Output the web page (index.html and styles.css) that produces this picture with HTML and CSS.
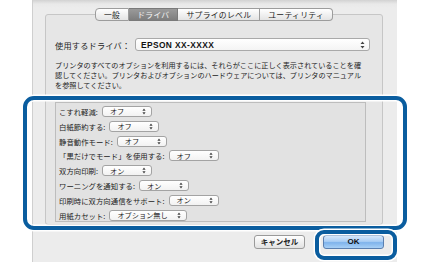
FILE: index.html
```html
<!DOCTYPE html>
<html lang="ja">
<head>
    <meta charset="UTF-8">
    <title>プリンタオプション</title>
    <link rel="stylesheet" href="styles.css">
</head>
<body>

<div class="screen">
    <div class="window">
        <div class="tabbox">
            <div class="tabs">
                <span class="tab">一般</span>
                <span class="tab active">ドライバ</span>
                <span class="tab">サプライのレベル</span>
                <span class="tab">ユーティリティ</span>
            </div>

            <div class="driver-row">
                <span class="driver-label">使用するドライバ：</span>
                <div class="driver-select">
                    <span>EPSON XX-XXXX</span>
                    <svg class="arrows" width="5" height="8" viewBox="0 0 5 8"><path d="M2.5 0.5 L4.5 3 L0.5 3 Z M2.5 7.5 L4.5 5 L0.5 5 Z" fill="#444"/></svg>
                </div>
            </div>

            <p class="note">
                プリンタのすべてのオプションを利用するには、それらがここに正しく表示されていることを確<br>
                認してください。プリンタおよびオプションのハードウェアについては、プリンタのマニュアル<br>
                を参照してください。
            </p>

            <div class="options">
                <div class="opt-row">
                    <span class="opt-label">こすれ軽減:</span>
                    <div class="popup"><span>オフ</span><svg class="arrows" width="4" height="7" viewBox="0 0 4 7"><path d="M2 0.5 L3.6 2.7 L0.4 2.7 Z M2 6.5 L3.6 4.3 L0.4 4.3 Z" fill="#444"/></svg></div>
                </div>
                <div class="opt-row">
                    <span class="opt-label">白紙節約する:</span>
                    <div class="popup"><span>オフ</span><svg class="arrows" width="4" height="7" viewBox="0 0 4 7"><path d="M2 0.5 L3.6 2.7 L0.4 2.7 Z M2 6.5 L3.6 4.3 L0.4 4.3 Z" fill="#444"/></svg></div>
                </div>
                <div class="opt-row">
                    <span class="opt-label">静音動作モード:</span>
                    <div class="popup"><span>オフ</span><svg class="arrows" width="4" height="7" viewBox="0 0 4 7"><path d="M2 0.5 L3.6 2.7 L0.4 2.7 Z M2 6.5 L3.6 4.3 L0.4 4.3 Z" fill="#444"/></svg></div>
                </div>
                <div class="opt-row">
                    <span class="opt-label">「黒だけでモード」を使用する:</span>
                    <div class="popup"><span>オフ</span><svg class="arrows" width="4" height="7" viewBox="0 0 4 7"><path d="M2 0.5 L3.6 2.7 L0.4 2.7 Z M2 6.5 L3.6 4.3 L0.4 4.3 Z" fill="#444"/></svg></div>
                </div>
                <div class="opt-row">
                    <span class="opt-label">双方向印刷:</span>
                    <div class="popup"><span>オン</span><svg class="arrows" width="4" height="7" viewBox="0 0 4 7"><path d="M2 0.5 L3.6 2.7 L0.4 2.7 Z M2 6.5 L3.6 4.3 L0.4 4.3 Z" fill="#444"/></svg></div>
                </div>
                <div class="opt-row">
                    <span class="opt-label">ワーニングを通知する:</span>
                    <div class="popup"><span>オン</span><svg class="arrows" width="4" height="7" viewBox="0 0 4 7"><path d="M2 0.5 L3.6 2.7 L0.4 2.7 Z M2 6.5 L3.6 4.3 L0.4 4.3 Z" fill="#444"/></svg></div>
                </div>
                <div class="opt-row">
                    <span class="opt-label">印刷時に双方向通信をサポート:</span>
                    <div class="popup"><span>オン</span><svg class="arrows" width="4" height="7" viewBox="0 0 4 7"><path d="M2 0.5 L3.6 2.7 L0.4 2.7 Z M2 6.5 L3.6 4.3 L0.4 4.3 Z" fill="#444"/></svg></div>
                </div>
                <div class="opt-row">
                    <span class="opt-label">用紙カセット:</span>
                    <div class="popup wide"><span>オプション無し</span><svg class="arrows" width="4" height="7" viewBox="0 0 4 7"><path d="M2 0.5 L3.6 2.7 L0.4 2.7 Z M2 6.5 L3.6 4.3 L0.4 4.3 Z" fill="#444"/></svg></div>
                </div>
            </div>
        </div>

        <div class="buttons">
            <button class="btn">キャンセル</button>
            <button class="btn default">OK</button>
        </div>
    </div>

    <!-- callouts drawn over the dialog -->
    <div class="callout callout-options"></div>
    <div class="callout callout-ok"></div>
</div>

</body>
</html>
```

FILE: styles.css
```css
body {
    margin: 0;
    background: #fff;
    font-family: "Noto Sans CJK JP", "DejaVu Sans", sans-serif;
    color: #1e1e1e;
}

.screen {
    position: relative;
    width: 430px;
    height: 262px;
    overflow: hidden;
}

.window {
    margin-left: 32px;
    width: 365px;
    height: 262px;
    box-sizing: border-box;
    border-left: 1px solid #cfcfcf;
    background: linear-gradient(#d2d2d2, #e9e9e9 4px, #ececec 8px);
    padding-top: 14px;
}

/* group box with tabs */
.tabbox {
    margin: 0 14px 0 12px;
    height: 211px;
    box-sizing: border-box;
    border: 1px solid #c6c6c6;
    border-radius: 3px;
    background: #e6e6e6;
    padding: 0 0 0 9px;
}

.tabs {
    display: flex;
    justify-content: center;
    margin: -7px 0 0 -9px;
    height: 13px;
}

.tab {
    font-size: 7.8px;
    line-height: 11px;
    padding: 0 8px;
    border: 1px solid #9c9c9c;
    border-left: none;
    background: linear-gradient(#ffffff, #f1f1f1 50%, #e4e4e4);
    color: #1a1a1a;
    letter-spacing: 0.3px;
}

.tab:first-child {
    border-left: 1px solid #9c9c9c;
    border-radius: 4px 0 0 4px;
}

.tab:last-child {
    border-radius: 0 4px 4px 0;
}

.tab.active {
    background: linear-gradient(#9a9a9a, #7e7e7e);
    color: #f4f4f4;
    border-color: #7a7a7a;
}

/* driver */
.driver-row {
    display: flex;
    align-items: center;
    margin-top: 17px;
    height: 13px;
}

.driver-label {
    font-size: 8.2px;
    width: 80px;
    letter-spacing: 0.2px;
}

.driver-select {
    width: 235px;
    height: 13px;
    box-sizing: border-box;
    border: 1px solid #a9a9a9;
    border-radius: 3px;
    background: linear-gradient(#ffffff, #f4f4f4);
    display: flex;
    align-items: center;
    justify-content: space-between;
    padding: 0 4px 0 5px;
    font-family: "Liberation Sans", Arial, sans-serif;
    font-size: 8.4px;
    font-weight: bold;
    color: #111;
}

.driver-select span {
    letter-spacing: 0.4px;
}

.note {
    margin: 9px 0 0;
    font-size: 7.15px;
    line-height: 10px;
    color: #222;
    white-space: nowrap;
}

/* installable options list */
.options {
    margin: 12px 16px 0 0;
    height: 120px;
    box-sizing: border-box;
    border: 1px solid #bdbdbd;
    background: #e2e2e2;
    padding: 1px 0 0 3px;
}

.opt-row {
    display: flex;
    align-items: center;
    height: 14.85px;
}

.opt-label {
    font-size: 7.4px;
    color: #222;
    margin-right: 4px;
}

.popup {
    width: 50px;
    height: 11px;
    box-sizing: border-box;
    border: 1px solid #a3a3a3;
    border-radius: 3px;
    background: linear-gradient(#ffffff, #f2f2f2);
    display: flex;
    align-items: center;
    justify-content: space-between;
    padding: 0 5px 0 7px;
    font-size: 7.2px;
    color: #1a1a1a;
}

.popup.wide {
    width: 78px;
}

/* bottom buttons */
.buttons {
    display: flex;
    justify-content: flex-end;
    gap: 18px;
    margin-top: 10px;
    padding-right: 13px;
}

.btn {
    height: 14px;
    width: 51px;
    padding: 0;
    border: 1px solid #9a9a9a;
    border-radius: 3px;
    background: linear-gradient(#ffffff, #f0f0f0 50%, #e2e2e2);
    font-family: "Noto Sans CJK JP", sans-serif;
    font-size: 7.5px;
    font-weight: bold;
    color: #222;
    line-height: 12px;
}

.btn.default {
    width: 61px;
    border-color: #5a7fb0;
    background: linear-gradient(#d6e8fb, #a9cdf4 45%, #7fb3ec 55%, #a8d0f6);
    font-family: "Liberation Sans", Arial, sans-serif;
    font-size: 8px;
    color: #111;
}

/* blue callout frames */
.callout {
    position: absolute;
    box-sizing: border-box;
    border: 4px solid #0a5d9f;
    box-shadow: 0 0 0 1.5px #fff, inset 0 0 0 1.5px #fff;
}

.callout-options {
    left: 23px;
    top: 96px;
    width: 384px;
    height: 134px;
    border-radius: 11px;
}

.callout-ok {
    left: 315px;
    top: 230px;
    width: 82px;
    height: 30px;
    border-radius: 9px;
}
```
